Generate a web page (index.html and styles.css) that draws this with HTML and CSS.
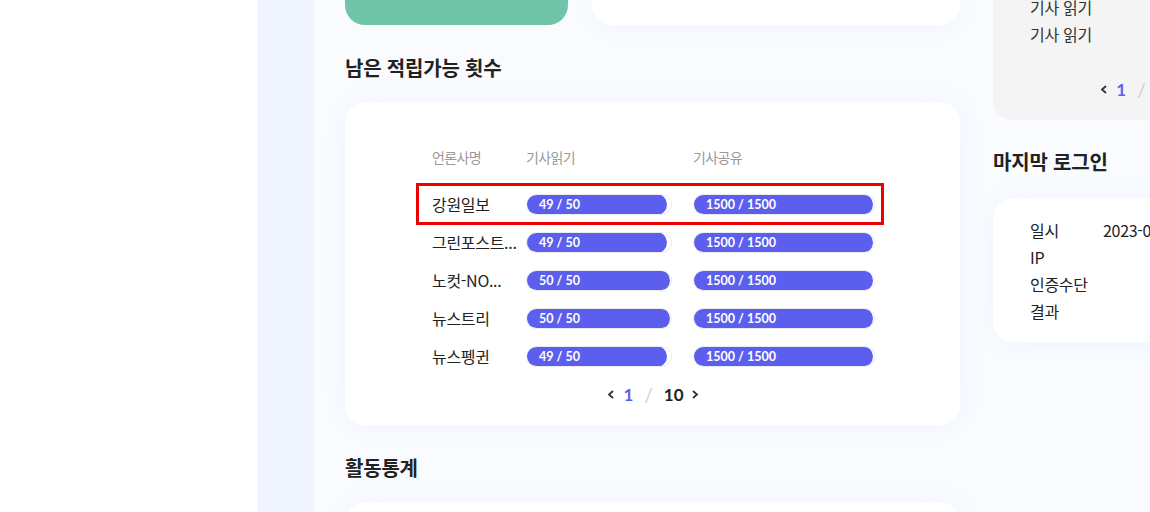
FILE: index.html
```html
<!DOCTYPE html>
<html lang="ko">
<head>
<meta charset="utf-8">
<link rel="stylesheet" href="styles.css">
</head>
<body>
<div class="layout">
  <div class="blank"></div>
  <div class="rail"></div>
  <div class="main">
    <div class="center">
      <div class="top-row">
        <div class="green-card"></div>
        <div class="white-top"></div>
      </div>
      <h2 class="section-title">남은 적립가능 횟수</h2>
      <div class="card quota-card">
        <div class="quota-table">
          <div class="qrow qhead">
            <div>언론사명</div><div>기사읽기</div><div>기사공유</div>
          </div>
          <div class="qrow highlight">
            <div class="name">강원일보</div>
            <div><div class="track read"><div class="fill" style="width:98%">49 / 50</div></div></div>
            <div><div class="track share"><div class="fill" style="width:100%">1500 / 1500</div></div></div>
          </div>
          <div class="qrow">
            <div class="name">그린포스트...</div>
            <div><div class="track read"><div class="fill" style="width:98%">49 / 50</div></div></div>
            <div><div class="track share"><div class="fill" style="width:100%">1500 / 1500</div></div></div>
          </div>
          <div class="qrow">
            <div class="name">노컷-NO...</div>
            <div><div class="track read"><div class="fill" style="width:100%">50 / 50</div></div></div>
            <div><div class="track share"><div class="fill" style="width:100%">1500 / 1500</div></div></div>
          </div>
          <div class="qrow">
            <div class="name">뉴스트리</div>
            <div><div class="track read"><div class="fill" style="width:100%">50 / 50</div></div></div>
            <div><div class="track share"><div class="fill" style="width:100%">1500 / 1500</div></div></div>
          </div>
          <div class="qrow">
            <div class="name">뉴스펭귄</div>
            <div><div class="track read"><div class="fill" style="width:98%">49 / 50</div></div></div>
            <div><div class="track share"><div class="fill" style="width:100%">1500 / 1500</div></div></div>
          </div>
        </div>
        <div class="pager">
          <svg class="chev" width="8" height="11" viewBox="0 0 8 11"><polyline points="6,2 2,5.5 6,9" fill="none" stroke="#333" stroke-width="1.8"/></svg>
          <span class="cur">1</span>
          <span class="sep">/</span>
          <span class="total">10</span>
          <svg class="chev" width="8" height="11" viewBox="0 0 8 11"><polyline points="2,2 6,5.5 2,9" fill="none" stroke="#333" stroke-width="1.8"/></svg>
        </div>
      </div>
      <h2 class="section-title">활동통계</h2>
      <div class="card stats-card"></div>
    </div>
    <div class="aside">
      <div class="gray-card">
        <div class="line">기사 읽기</div>
        <div class="line">기사 읽기</div>
        <div class="pager">
          <svg class="chev" width="8" height="11" viewBox="0 0 8 11"><polyline points="6,2 2,5.5 6,9" fill="none" stroke="#333" stroke-width="1.8"/></svg>
          <span class="cur">1</span>
          <span class="sep">/</span>
          <span class="total">3</span>
          <svg class="chev" width="8" height="11" viewBox="0 0 8 11"><polyline points="2,2 6,5.5 2,9" fill="none" stroke="#333" stroke-width="1.8"/></svg>
        </div>
      </div>
      <h2 class="section-title aside-title">마지막 로그인</h2>
      <div class="card login-card">
        <div class="kv"><span>일시</span><span>2023-05-12 10:24:31</span></div>
        <div class="kv"><span>IP</span><span></span></div>
        <div class="kv"><span>인증수단</span><span></span></div>
        <div class="kv"><span>결과</span><span></span></div>
      </div>
    </div>
  </div>
</div>
</body>
</html>
```

FILE: styles.css
```css
* { box-sizing: border-box; }
html, body {
  margin: 0;
  width: 1150px;
  height: 512px;
  overflow: hidden;
  background: #ffffff;
  font-family: "Noto Sans CJK KR", "Noto Sans", sans-serif;
  color: #222;
}
.layout {
  display: flex;
  height: 512px;
}
.blank { width: 257px; flex: none; background: #fff; }
.rail { width: 57px; flex: none; background: #f0f4fe; }
.main {
  flex: 1;
  display: flex;
  gap: 33px;
  padding-left: 31px;
  background: #f9fbff;
  overflow: hidden;
}
.center { width: 615px; flex: none; }
.aside { width: 296px; flex: none; }

.top-row { display: flex; gap: 24px; height: 25px; }
.green-card {
  width: 223px;
  background: #70c5a8;
  border-radius: 0 0 20px 20px;
}
.white-top {
  flex: 1;
  background: #fff;
  border-radius: 0 0 20px 20px;
  box-shadow: 0 0 24px rgba(120, 140, 210, 0.07);
}

.section-title {
  margin: 29px 0 20px;
  font-size: 20px;
  line-height: 28px;
  font-weight: 600;
  letter-spacing: -0.2px;
  color: #222;
}
.card {
  background: #fff;
  border-radius: 20px;
  box-shadow: 0 0 24px rgba(120, 140, 210, 0.07);
}
.quota-card { padding: 45px 86px 19px 87px; }
.quota-table { display: flex; flex-direction: column; }
.qrow {
  position: relative;
  display: grid;
  grid-template-columns: 94px 167px 182px;
  align-items: center;
  height: 38px;
}
.qrow.qhead {
  height: 20px;
  margin-bottom: 18px;
  font-size: 14px;
  letter-spacing: -0.6px;
  line-height: 20px;
  color: #999;
}
.qrow .name {
  font-size: 16px;
  letter-spacing: -0.3px;
  color: #222;
  white-space: nowrap;
}
.qrow.highlight::after {
  content: "";
  position: absolute;
  top: -2px;
  bottom: -2px;
  left: -16px;
  right: -10px;
  border: 3px solid #ee0000;
  pointer-events: none;
}
.track {
  height: 21px;
  border-radius: 11px;
  border: 1px solid #ebebf2;
  background: #fff;
  overflow: hidden;
}
.track.read { width: 146px; }
.track.share { width: 182px; }
.fill {
  margin: -1px 0 0 -1px;
  height: 21px;
  border-radius: 11px;
  background: #5c5fee;
  color: #fff;
  font-family: Lato, "Noto Sans", sans-serif;
  font-weight: 700;
  font-size: 12.5px;
  line-height: 21px;
  padding-left: 13px;
  white-space: nowrap;
}

.pager {
  display: flex;
  justify-content: center;
  align-items: center;
  height: 24px;
  margin-top: 7px;
  font-family: Lato, "Noto Sans", sans-serif;
  font-weight: 700;
  font-size: 17px;
}
.pager .chev { flex: none; }
.pager .cur { color: #5c5fee; margin-left: 8px; }
.pager .sep { color: #cfcfcf; font-weight: 400; font-size: 19px; margin-left: 11px; }
.pager .total { color: #222; margin-left: 11px; margin-right: 7px; }

.gray-card {
  margin-top: -6px;
  background: #f4f4f4;
  border-radius: 0 0 20px 20px;
  padding: 0 0 19px 37px;
}
.gray-card .line { font-size: 16px; letter-spacing: -0.3px; line-height: 27px; color: #333; }
.gray-card .pager { margin-top: 29px; padding-right: 37px; }

.aside-title { margin: 28px 0 22px; }
.login-card { padding: 19px 37px 17px; }
.kv {
  display: grid;
  grid-template-columns: 73px 1fr;
  font-size: 16px;
  letter-spacing: -0.3px;
  line-height: 27px;
  color: #222;
  white-space: nowrap;
}
.stats-card { height: 200px; }
```
